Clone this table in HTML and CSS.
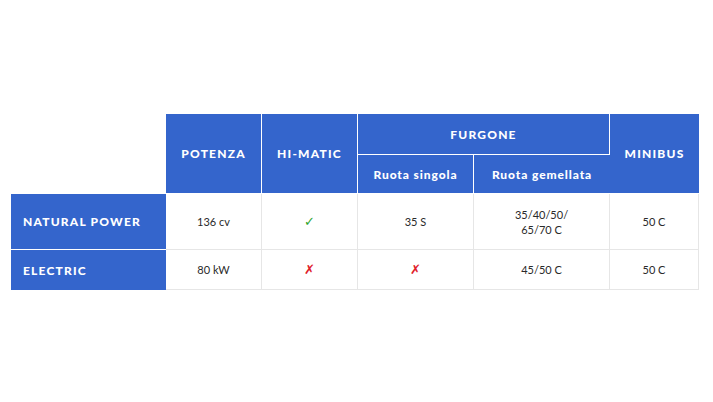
FILE: index.html
```html
<!DOCTYPE html>
<html lang="it">
<head>
<meta charset="utf-8">
<title>Gamma</title>
<link rel="stylesheet" href="styles.css">
</head>
<body>
<table class="grid">
  <colgroup>
    <col class="c1"><col class="c2"><col class="c3"><col class="c4"><col class="c5"><col class="c6">
  </colgroup>
  <thead>
    <tr class="h1">
      <th class="blank" rowspan="2"></th>
      <th class="hd" rowspan="2">POTENZA</th>
      <th class="hd" rowspan="2">HI-MATIC</th>
      <th class="hd" colspan="2">FURGONE</th>
      <th class="hd" rowspan="2">MINIBUS</th>
    </tr>
    <tr class="h2">
      <th class="hd sub">Ruota singola</th>
      <th class="hd sub">Ruota gemellata</th>
    </tr>
  </thead>
  <tbody>
    <tr class="r1">
      <th class="rh">NATURAL POWER</th>
      <td>136 cv</td>
      <td><span class="ok">✓</span></td>
      <td>35 S</td>
      <td>35/40/50/<br>65/70 C</td>
      <td>50 C</td>
    </tr>
    <tr class="r2">
      <th class="rh">ELECTRIC</th>
      <td>80 kW</td>
      <td><span class="no">✗</span></td>
      <td><span class="no">✗</span></td>
      <td>45/50 C</td>
      <td>50 C</td>
    </tr>
  </tbody>
</table>
</body>
</html>
```
FILE: styles.css
```css
html, body {
  margin: 0;
  background: #ffffff;
}
body {
  padding: 114px 0 0 11px;
  font-family: "Lato", "Liberation Sans", sans-serif;
}
.grid {
  border-collapse: separate;
  border-spacing: 0;
  table-layout: fixed;
  width: 688px;
}
.c1 { width: 155px; }
.c2 { width: 96px; }
.c3 { width: 96px; }
.c4 { width: 116px; }
.c5 { width: 136px; }
.c6 { width: 89px; }

.grid th, .grid td {
  padding: 0;
  box-sizing: border-box;
}
.blank {
  background: #ffffff;
  border-right: 1px solid #ffffff;
}
.hd {
  background: #3465cc;
  color: #ffffff;
  font-weight: 900;
  font-size: 12px;
  letter-spacing: 1.2px;
  text-align: center;
  border-right: 1px solid #ffffff;
  border-bottom: 1px solid #ffffff;
}
.hd:last-child { border-right: none; }
.h1 { height: 41px; }
.h2 { height: 39px; }
.sub {
  letter-spacing: 0.9px;
}
.rh {
  background: #3465cc;
  color: #ffffff;
  font-weight: 900;
  font-size: 12px;
  letter-spacing: 1.2px;
  text-align: left;
  padding-left: 12px !important;
  border-bottom: 1px solid #ffffff;
}
.r2 .rh { border-bottom: none; }
.grid td {
  text-align: center;
  font-size: 11px;
  color: #2a2a2a;
  line-height: 15px;
  border-right: 1px solid #e6e6e6;
  border-bottom: 1px solid #e6e6e6;
}
.r1 { height: 56px; }
.r2 { height: 40px; }
.ok {
  color: #2fa52f;
  font-size: 13px;
}
.no {
  color: #e0202a;
  font-size: 13px;
}
```
